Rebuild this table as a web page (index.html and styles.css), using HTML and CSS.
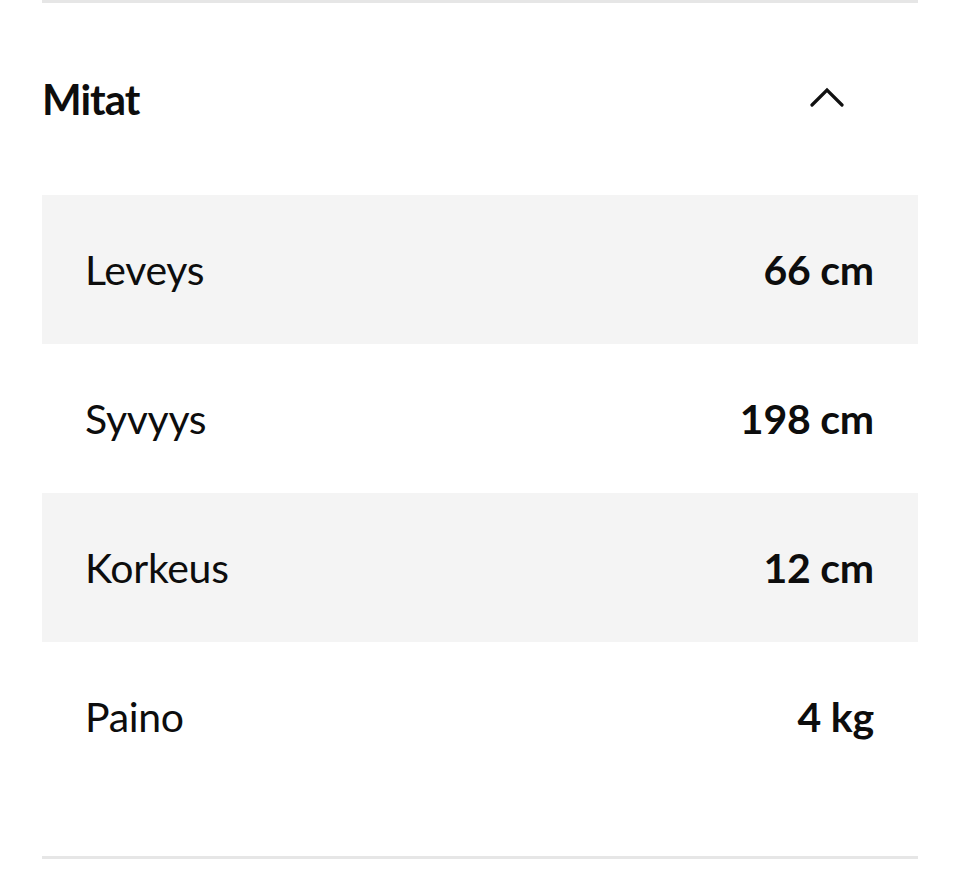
FILE: index.html
```html
<!DOCTYPE html>
<html lang="fi">
<head>
<meta charset="utf-8">
<title>Mitat</title>
<link rel="stylesheet" href="styles.css">
</head>
<body>
<section class="accordion">
  <div class="acc-header">
    <h2 class="acc-title">Mitat</h2>
    <svg class="chevron" width="34" height="20" viewBox="0 0 34 20" aria-hidden="true">
      <polyline points="2,18 17,3 32,18" fill="none" stroke="#111" stroke-width="3.2" stroke-linecap="round" stroke-linejoin="miter"/>
    </svg>
  </div>
  <dl class="specs">
    <div class="row shaded"><dt>Leveys</dt><dd>66 cm</dd></div>
    <div class="row"><dt>Syvyys</dt><dd>198 cm</dd></div>
    <div class="row shaded"><dt>Korkeus</dt><dd>12 cm</dd></div>
    <div class="row"><dt>Paino</dt><dd>4 kg</dd></div>
  </dl>
</section>
</body>
</html>
```
FILE: styles.css
```css
html, body {
  margin: 0;
  padding: 0;
  background: #fff;
}
body {
  font-family: Lato, "Noto Sans", sans-serif;
  color: #0d0d0d;
}
.accordion {
  margin: 0 42px;
  border-top: 3px solid #e6e6e6;
  border-bottom: 3px solid #e6e6e6;
  padding-bottom: 65px;
}
.acc-header {
  height: 192px;
  display: flex;
  align-items: center;
  justify-content: space-between;
}
.acc-title {
  margin: 0;
  font-size: 42px;
  font-weight: 700;
  letter-spacing: -1px;
}
.chevron {
  margin-right: 74px;
  margin-top: -4px;
}
.specs {
  margin: 0;
}
.row {
  height: 149px;
  display: flex;
  align-items: center;
  justify-content: space-between;
  padding: 0 44px 0 43px;
  font-size: 41px;
}
.row.shaded {
  background: #f4f4f4;
}
.row dt {
  font-weight: 400;
  letter-spacing: -0.3px;
}
.row dd {
  margin: 0;
  font-weight: 700;
  letter-spacing: -0.2px;
}
```
